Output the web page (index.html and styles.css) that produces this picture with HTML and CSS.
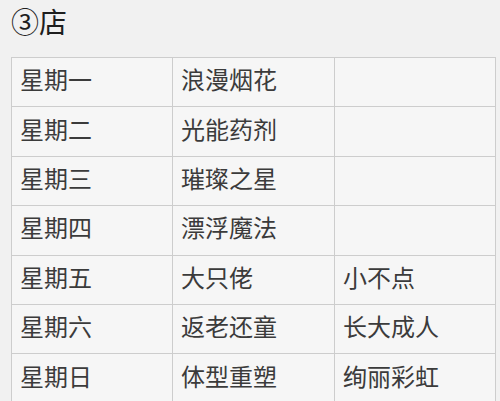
FILE: index.html
```html
<!DOCTYPE html>
<html lang="zh">
<head>
<meta charset="utf-8">
<link rel="stylesheet" href="styles.css">
</head>
<body>
<div class="page">
  <h1 class="title">③店</h1>
  <table class="schedule">
    <tr><td>星期一</td><td>浪漫烟花</td><td></td></tr>
    <tr><td>星期二</td><td>光能药剂</td><td></td></tr>
    <tr><td>星期三</td><td>璀璨之星</td><td></td></tr>
    <tr><td>星期四</td><td>漂浮魔法</td><td></td></tr>
    <tr><td>星期五</td><td>大只佬</td><td>小不点</td></tr>
    <tr><td>星期六</td><td>返老还童</td><td>长大成人</td></tr>
    <tr><td>星期日</td><td>体型重塑</td><td>绚丽彩虹</td></tr>
  </table>
</div>
</body>
</html>
```
FILE: styles.css
```css
html, body {
  margin: 0;
  padding: 0;
  background: #f1f1f1;
  overflow: hidden;
}
body {
  width: 500px;
  height: 401px;
  font-family: "Noto Sans CJK SC", "Noto Sans", sans-serif;
  color: #3b3b3b;
}
.page {
  padding: 0 5px 0 11px;
}
.title {
  margin: 0;
  height: 57px;
  box-sizing: border-box;
  padding-top: 4px;
  font-size: 28px;
  line-height: 34px;
  font-weight: 400;
  color: #1e1e1e;
}
.schedule {
  border-collapse: collapse;
  width: 485px;
  table-layout: fixed;
  background: #f6f6f6;
}
.schedule td {
  border: 1px solid #cdcdcd;
  height: 49.4px;
  padding: 0 0 6px 8px;
  box-sizing: border-box;
  font-size: 24px;
  line-height: 30px;
  vertical-align: middle;
  white-space: nowrap;
}
.schedule td:nth-child(1) { width: 161px; }
.schedule td:nth-child(2) { width: 162px; }
```
